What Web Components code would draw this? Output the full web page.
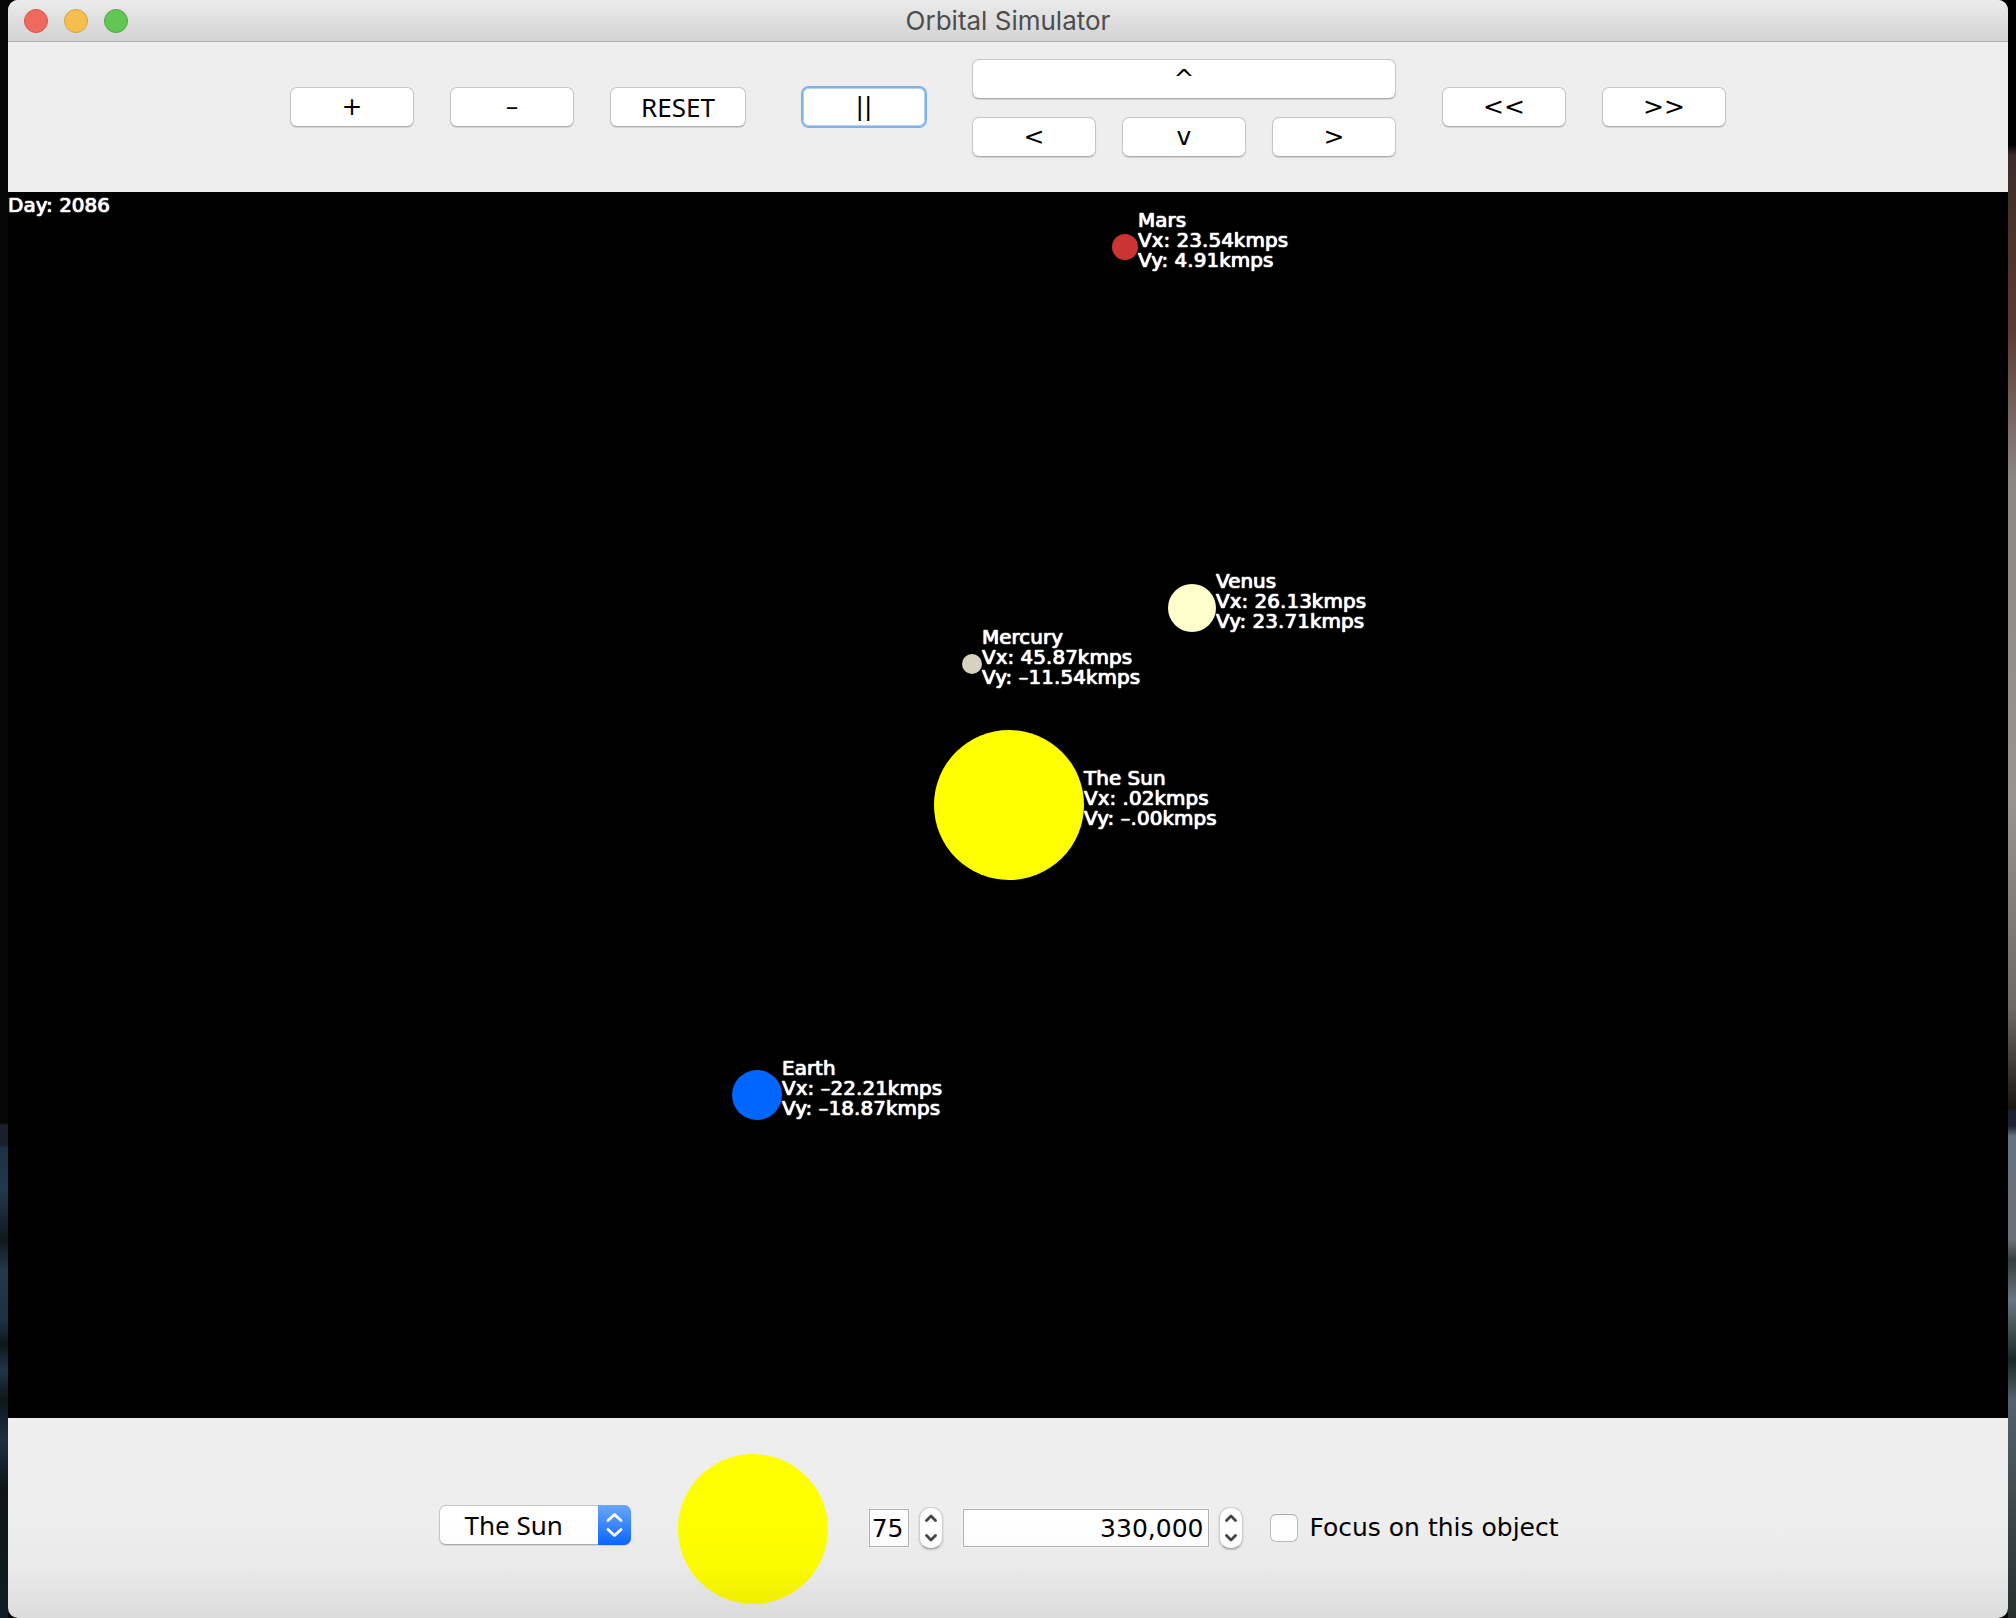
<!DOCTYPE html>
<html lang="en">
<head>
<meta charset="utf-8">
<title>Orbital Simulator</title>
<style>
  html, body { margin: 0; }
  body {
    min-height: 100vh;
    box-sizing: border-box;
    padding: 0 8px;
    display: flex;
    flex-direction: column;
    font: 25px/30px "DejaVu Sans", sans-serif;
    color: #000;
    background:
      linear-gradient(#000 0 145px, #3a2c2a 155px, #4a342c 240px, #5a3a34 330px, #8d8784 480px, #9a948e 800px, #6e6862 1010px, #1a1710 1108px, #1c2230 1112px 1126px, #66727a 1136px, #6c7078 1240px, #343e3e 1260px, #6c7680 1300px, #1c2826 1360px, #56606a 1400px, #26302e 1618px) right top / 8px 100% no-repeat,
      linear-gradient(#060606 0 1123px, #1a1f2b 1125px 1144px, #1c3144 1148px, #22384c 1190px, #10181c 1240px, #23394b 1270px, #1c3042 1320px, #0e1719 1345px, #20344a 1370px, #0e1618 1400px, #1c2f42 1440px, #0d1516 1490px, #101c24 1618px) left top / 8px 100% no-repeat,
      #000;
  }
  sim-window { flex: 1; }
</style>
</head>
<body>
<sim-window heading="Orbital Simulator">
  <sim-toolbar></sim-toolbar>
  <sim-space day="2086">
    <sim-body name="Mars" vx="23.54" vy="4.91" x="117" y="-558" size="26" color="#cc3333"></sim-body>
    <sim-body name="Venus" vx="26.13" vy="23.71" x="184" y="-197" size="48" color="#ffffcc"></sim-body>
    <sim-body name="Mercury" vx="45.87" vy="-11.54" x="-36" y="-141" size="20" color="#d5d2c1"></sim-body>
    <sim-body name="The Sun" vx=".02" vy="-.00" x="1" y="0" size="150" color="#ffff00"></sim-body>
    <sim-body name="Earth" vx="-22.21" vy="-18.87" x="-251" y="290" size="50" color="#0066ff"></sim-body>
  </sim-space>
  <sim-inspector></sim-inspector>
</sim-window>

<script>
  class SimElement extends HTMLElement {
    render(html) {
      this.attachShadow({ mode: "open" }).innerHTML = html;
    }
  }

  customElements.define("sim-window", class extends SimElement {
    connectedCallback() {
      this.render(`
        <style>
          :host { display: flex; flex-direction: column; border-radius: 10px; overflow: hidden; background: #eee; }
          header {
            display: grid; grid-template-columns: 1fr auto 1fr; align-items: center;
            height: 42px; box-sizing: border-box; padding: 0 16px;
            border-bottom: 1px solid #b0b0b0;
            background: linear-gradient(#ebebeb, #d3d3d3);
          }
          .lights { display: flex; gap: 16px; }
          .lights button { width: 24px; height: 24px; padding: 0; border-radius: 50%; border: 1px solid; }
          .close { background: #ee6a5f; border-color: #d9534b !important; }
          .min { background: #f5bf4f; border-color: #d8a03d !important; }
          .max { background: #62c654; border-color: #4fa73f !important; }
          h1 { margin: 0; font: 26px/30px Inter, Roboto, sans-serif; color: #4d4d4d; }
          ::slotted(sim-space) { flex: 1; }
        </style>
        <header>
          <div class="lights">
            <button class="close" aria-label="Close"></button>
            <button class="min" aria-label="Minimise"></button>
            <button class="max" aria-label="Zoom"></button>
          </div>
          <h1>${this.getAttribute("heading")}</h1>
        </header>
        <slot></slot>`);
    }
  });

  customElements.define("sim-button", class extends SimElement {
    connectedCallback() {
      this.render(`
        <style>
          :host { display: block; min-width: 124px; }
          button {
            display: block; width: 100%; height: 40px; padding: 0 30px; box-sizing: border-box;
            font: inherit; color: #000; background: #fff;
            border: 1px solid #c6c6c6; border-bottom-color: #acacac; border-radius: 7px;
            box-shadow: 0 1px 1px rgba(0,0,0,.12);
          }
          :host([active]) button { border-color: #7fb0ea; box-shadow: 0 0 0 1px #7fb0ea, inset 0 0 0 1px #b5d3f7; }
          :host([word]) button { font: 26px/30px "Noto Sans", sans-serif; }
        </style>
        <button type="button"><slot></slot></button>`);
    }
  });

  customElements.define("sim-toolbar", class extends SimElement {
    connectedCallback() {
      this.render(`
        <style>
          :host { display: flex; justify-content: center; align-items: flex-start; gap: 46px; height: 150px; box-sizing: border-box; padding-top: 17px; }
          .group { display: flex; gap: 36px; padding-top: 28px; }
          .pause { margin-left: 10px; }
          .pan { display: grid; grid-template-columns: repeat(3, 124px); gap: 18px 26px; }
          .up { grid-column: 1 / -1; }
        </style>
        <div class="group">
          <sim-button>+</sim-button>
          <sim-button>–</sim-button>
          <sim-button word>RESET</sim-button>
        </div>
        <div class="group pause"><sim-button active>||</sim-button></div>
        <div class="pan">
          <sim-button class="up">^</sim-button>
          <sim-button>&lt;</sim-button>
          <sim-button>v</sim-button>
          <sim-button>&gt;</sim-button>
        </div>
        <div class="group">
          <sim-button>&lt;&lt;</sim-button>
          <sim-button>&gt;&gt;</sim-button>
        </div>`);
    }
  });

  customElements.define("sim-space", class extends SimElement {
    connectedCallback() {
      this.render(`
        <style>
          :host { display: block; position: relative; overflow: hidden; background: #000; color: #fff; font-size: 20px; line-height: 20px; text-shadow: 0 0 1px #fff, 0 0 1px #fff, 0 0 1px #fff; }
          p { margin: 0; padding-top: 3px; }
        </style>
        <p>Day: ${this.getAttribute("day")}</p>
        <slot></slot>`);
    }
  });

  /* x and y are the distances of the body's centre from the centre of the view */
  customElements.define("sim-body", class extends SimElement {
    connectedCallback() {
      const get = (n) => this.getAttribute(n);
      this.render(`
        <style>
          :host {
            position: absolute;
            left: calc(50% + ${get("x") - get("size") / 2}px);
            top: calc(50% + ${get("y")}px);
            height: 0; display: flex; align-items: center; white-space: nowrap;
          }
          i { width: ${get("size")}px; height: ${get("size")}px; border-radius: 50%; background: ${get("color")}; }
          div { padding-bottom: 15px; }
        </style>
        <i></i>
        <div>${get("name")}<br>Vx: ${get("vx").replace("-", "–")}kmps<br>Vy: ${get("vy").replace("-", "–")}kmps</div>`);
    }
  });

  customElements.define("sim-select", class extends SimElement {
    connectedCallback() {
      this.render(`
        <style>
          :host { display: grid; width: 192px; height: 40px; }
          select, svg { grid-area: 1 / 1; }
          select {
            appearance: none; width: 100%; height: 40px; box-sizing: border-box; padding: 0 40px 0 24px;
            font: 26px/30px "Noto Sans", sans-serif; color: #000; background: #fff;
            border: 1px solid #c6c6c6; border-bottom-color: #acacac; border-radius: 7px;
            box-shadow: 0 1px 1px rgba(0,0,0,.12);
          }
          svg { justify-self: end; pointer-events: none; z-index: 1; }
        </style>
        <select aria-label="Object">
          <option>The Sun</option><option>Mercury</option><option>Venus</option><option>Earth</option><option>Mars</option>
        </select>
        <svg width="33" height="40" viewBox="0 0 33 40">
          <defs><linearGradient id="g" x2="0" y2="1"><stop stop-color="#6ba6f9"/><stop offset="1" stop-color="#0a67ff"/></linearGradient></defs>
          <path d="M0 0h26a7 7 0 0 1 7 7v26a7 7 0 0 1-7 7H0z" fill="url(#g)"/>
          <path d="M10 15.500l6.500-6 6.500 6M10 24.500l6.500 6 6.500-6" fill="none" stroke="#fff" stroke-width="2.800" stroke-linecap="round" stroke-linejoin="round"/>
        </svg>`);
    }
  });

  customElements.define("sim-spinner", class extends SimElement {
    connectedCallback() {
      this.render(`
        <style>
          :host { display: flex; align-items: center; gap: 10px; }
          input {
            width: ${this.getAttribute("width")}px; height: 38px; box-sizing: border-box; padding: 0 5px 0 0;
            font: inherit; text-align: right; color: #000; background: #fff;
            border: 1px solid #b0b0b0; border-radius: 0; outline: 1px solid #f6f6f6;
          }
          .step {
            display: flex; flex-direction: column; width: 24px; height: 42px; box-sizing: border-box;
            border: 1px solid #cfcfcf; border-bottom-color: #a8a8a8; border-radius: 11px; background: #fff;
            box-shadow: 0 1px 2px rgba(0,0,0,.2);
          }
          button { flex: 1; display: flex; justify-content: center; align-items: center; padding: 0; border: 0; background: none; }
          path { fill: none; stroke: #444; stroke-width: 2.800; stroke-linecap: round; stroke-linejoin: round; }
        </style>
        <input type="text" aria-label="${this.getAttribute("label")}" value="${this.getAttribute("value")}">
        <div class="step">
          <button type="button" aria-label="Increase"><svg width="12" height="8" viewBox="0 0 12 8"><path d="M1.500 6.500L6 2l4.500 4.500"/></svg></button>
          <button type="button" aria-label="Decrease"><svg width="12" height="8" viewBox="0 0 12 8"><path d="M1.500 1.500L6 6l4.500-4.500"/></svg></button>
        </div>`);
    }
  });

  customElements.define("sim-checkbox", class extends SimElement {
    connectedCallback() {
      this.render(`
        <style>
          :host { display: flex; align-items: center; gap: 11px; white-space: nowrap; }
          input {
            appearance: none; width: 28px; height: 28px; margin: 0; border-radius: 6px;
            border: 1px solid #bcbcbc; border-top-color: #a8a8a8;
            background: linear-gradient(#f6f6f6, #fff 8px);
          }
        </style>
        <input type="checkbox" id="c"><label for="c"><slot></slot></label>`);
    }
  });

  customElements.define("sim-inspector", class extends SimElement {
    connectedCallback() {
      this.render(`
        <style>
          :host { position: relative; display: flex; justify-content: center; align-items: center; height: 200px; box-sizing: border-box; padding: 20px 18px 0 0; }
          :host::after {
            content: ""; position: absolute; inset: 0; pointer-events: none;
            background: linear-gradient(transparent 50%, rgba(0,0,0,.02) 75%, rgba(0,0,0,.08)); z-index: 2;
          }
          sim-select { margin: 0 47px 6px 0; }
          .swatch { width: 150px; height: 150px; border-radius: 50%; background: #ff0; margin: 2px 41px 0 0; }
          sim-spinner { margin-right: 20px; }
          sim-checkbox { margin-left: 7px; }
        </style>
        <sim-select></sim-select>
        <div class="swatch"></div>
        <sim-spinner label="Radius" value="75" width="40"></sim-spinner>
        <sim-spinner label="Mass" value="330,000" width="246"></sim-spinner>
        <sim-checkbox>Focus on this object</sim-checkbox>`);
    }
  });
</script>
</body>
</html>
